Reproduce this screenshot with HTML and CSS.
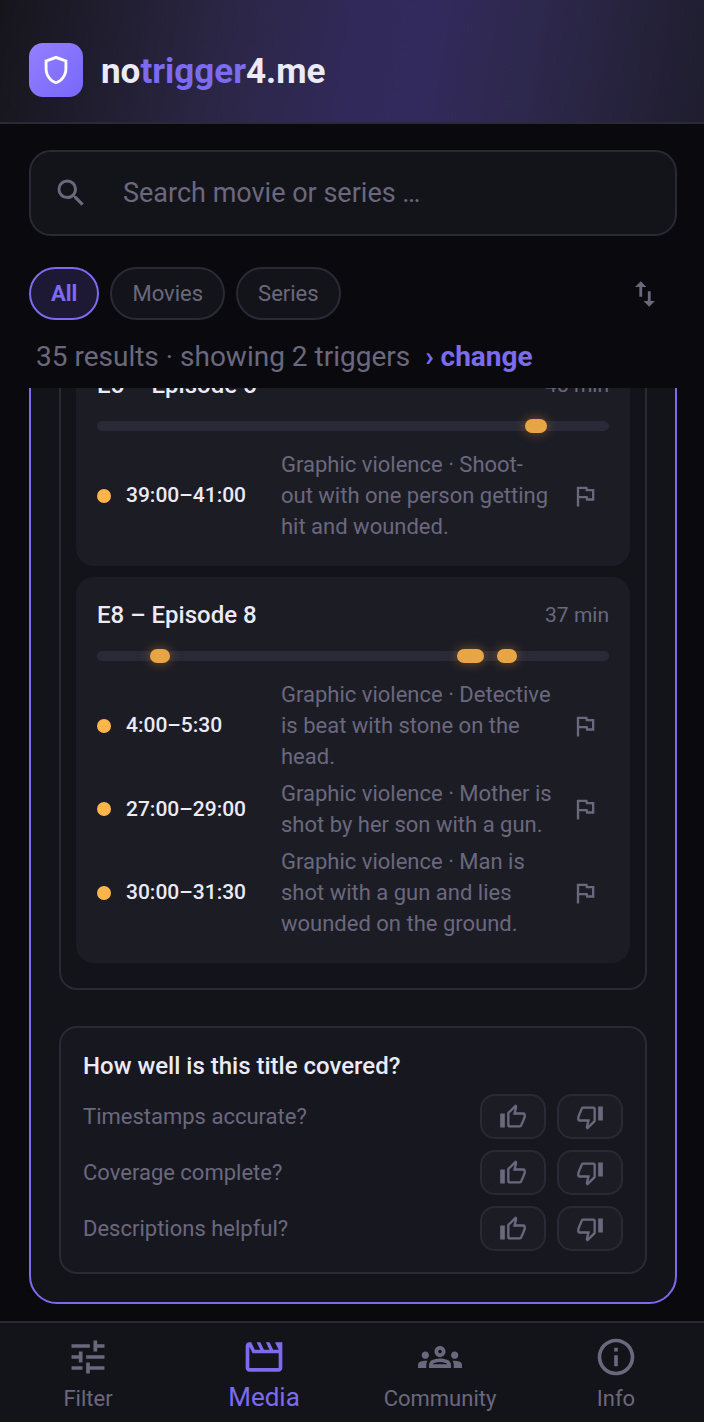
FILE: index.html
```html
<!DOCTYPE html>
<html lang="en">
<head>
    <meta charset="UTF-8">
    <meta name="viewport" content="width=device-width, initial-scale=1.0">
    <title>notrigger4.me</title>
    <link rel="stylesheet" href="styles.css">
</head>
<body>
    <svg class="sprite" aria-hidden="true">
        <symbol id="flag" viewBox="0 0 24 24"><path d="M12.36 6l.4 2H18v6h-3.36l-.4-2H7V6h5.36M14 4H5v17h2v-7h5.6l.4 2h7V6h-5.6L14 4z"/></symbol>
        <symbol id="thumb-up" viewBox="0 0 24 24"><path d="M9 21h9c.83 0 1.54-.5 1.84-1.22l3.02-7.05c.09-.23.14-.47.14-.73v-2c0-1.1-.9-2-2-2h-6.31l.95-4.57.03-.32c0-.41-.17-.79-.44-1.06L14.17 1 7.58 7.59C7.22 7.95 7 8.45 7 9v10c0 1.1.9 2 2 2zM9 9l4.34-4.34L12 10h9v2l-3 7H9V9zM1 9h4v12H1z"/></symbol>
        <symbol id="thumb-down" viewBox="0 0 24 24"><path d="M15 3H6c-.83 0-1.54.5-1.84 1.22l-3.02 7.05c-.09.23-.14.47-.14.73v2c0 1.1.9 2 2 2h6.31l-.95 4.57-.03.32c0 .41.17.79.44 1.06L9.83 23l6.59-6.59c.36-.36.58-.86.58-1.41V5c0-1.1-.9-2-2-2zm0 12l-4.34 4.34L12 14H3v-2l3-7h9v10zm4-12h4v12h-4V3z"/></symbol>
    </svg>

    <header class="header">
        <div class="logo">
            <svg viewBox="0 0 24 24"><path d="M12 2L4 5v6.09c0 5.05 3.41 9.76 8 10.91 4.59-1.15 8-5.86 8-10.91V5l-8-3zm6 9.09c0 4-2.55 7.7-6 8.83-3.45-1.13-6-4.82-6-8.83V6.31l6-2.12 6 2.12v4.78z"/></svg>
        </div>
        <h1 class="brand">no<span>trigger</span>4.me</h1>
    </header>

    <section class="controls">
        <label class="search">
            <svg viewBox="0 0 24 24"><path d="M15.5 14h-.79l-.28-.27A6.471 6.471 0 0 0 16 9.5 6.5 6.5 0 1 0 9.5 16c1.61 0 3.09-.59 4.23-1.57l.27.28v.79l5 4.99L20.49 19l-4.99-5zm-6 0C7.01 14 5 11.99 5 9.5S7.01 5 9.5 5 14 7.01 14 9.5 11.99 14 9.5 14z"/></svg>
            <input type="text" placeholder="Search movie or series …" aria-label="Search movie or series">
        </label>
        <div class="chips">
            <button class="chip active" type="button">All</button>
            <button class="chip" type="button">Movies</button>
            <button class="chip" type="button">Series</button>
            <button class="sort" type="button" aria-label="Sort">
                <svg viewBox="0 0 24 24"><path d="M16 17.01V10h-2v7.01h-3L15 21l4-3.99h-3zM9 3L5 6.99h3V14h2V6.99h3L9 3z"/></svg>
            </button>
        </div>
        <p class="status">35 results · showing 2 triggers <a href="#filter">› change</a></p>
    </section>

    <main class="list">
        <article class="title-card">
            <section class="season">
                <div class="episode">
                    <div class="episode-head">
                        <h2>E5 – Episode 5</h2>
                        <span>45 min</span>
                    </div>
                    <div class="timeline">
                        <span class="mark" style="left: 83.6%; width: 4.3%"></span>
                    </div>
                    <ul class="scenes">
                        <li>
                            <span class="time">39:00–41:00</span>
                            <p>Graphic violence · Shoot-<br>out with one person getting hit and wounded.</p>
                            <button type="button" aria-label="Report"><svg><use href="#flag"/></svg></button>
                        </li>
                    </ul>
                </div>
                <div class="episode">
                    <div class="episode-head">
                        <h2>E8 – Episode 8</h2>
                        <span>37 min</span>
                    </div>
                    <div class="timeline">
                        <span class="mark" style="left: 10.4%; width: 3.9%"></span>
                        <span class="mark" style="left: 70.3%; width: 5.3%"></span>
                        <span class="mark" style="left: 78.2%; width: 3.9%"></span>
                    </div>
                    <ul class="scenes">
                        <li>
                            <span class="time">4:00–5:30</span>
                            <p>Graphic violence · Detective is beat with stone on the head.</p>
                            <button type="button" aria-label="Report"><svg><use href="#flag"/></svg></button>
                        </li>
                        <li>
                            <span class="time">27:00–29:00</span>
                            <p>Graphic violence · Mother is shot by her son with a gun.</p>
                            <button type="button" aria-label="Report"><svg><use href="#flag"/></svg></button>
                        </li>
                        <li>
                            <span class="time">30:00–31:30</span>
                            <p>Graphic violence · Man is shot with a gun and lies wounded on the ground.</p>
                            <button type="button" aria-label="Report"><svg><use href="#flag"/></svg></button>
                        </li>
                    </ul>
                </div>
            </section>

            <section class="feedback">
                <h2>How well is this title covered?</h2>
                <div class="question">
                    <span>Timestamps accurate?</span>
                    <button type="button" aria-label="Yes"><svg><use href="#thumb-up"/></svg></button>
                    <button type="button" aria-label="No"><svg><use href="#thumb-down"/></svg></button>
                </div>
                <div class="question">
                    <span>Coverage complete?</span>
                    <button type="button" aria-label="Yes"><svg><use href="#thumb-up"/></svg></button>
                    <button type="button" aria-label="No"><svg><use href="#thumb-down"/></svg></button>
                </div>
                <div class="question">
                    <span>Descriptions helpful?</span>
                    <button type="button" aria-label="Yes"><svg><use href="#thumb-up"/></svg></button>
                    <button type="button" aria-label="No"><svg><use href="#thumb-down"/></svg></button>
                </div>
            </section>
        </article>
    </main>

    <nav class="tabs">
        <a href="#filter">
            <svg viewBox="0 0 24 24"><path d="M3 17v2h6v-2H3zM3 5v2h10V5H3zm10 16v-2h8v-2h-8v-2h-2v6h2zM7 9v2H3v2h4v2h2V9H7zm14 4v-2H11v2h10zm-6-4h2V7h4V5h-4V3h-2v6z"/></svg>
            Filter
        </a>
        <a class="active" href="#media">
            <svg viewBox="0 0 24 24"><path d="M4 6.47L5.76 10H20v8H4V6.47M22 4h-4l2 4h-3l-2-4h-2l2 4h-3l-2-4H8l2 4H7L5 4H4c-1.1 0-1.99.9-1.99 2L2 18c0 1.1.9 2 2 2h16c1.1 0 2-.9 2-2V4z"/></svg>
            Media
        </a>
        <a href="#community">
            <svg viewBox="0 0 24 24"><path d="M4 13c1.1 0 2-.9 2-2s-.9-2-2-2-2 .9-2 2 .9 2 2 2zm1.13 1.1C4.76 14.04 4.39 14 4 14c-.99 0-1.93.21-2.78.58C.48 14.9 0 15.62 0 16.43V18h4.5v-1.61c0-.83.23-1.61.63-2.29zM20 13c1.1 0 2-.9 2-2s-.9-2-2-2-2 .9-2 2 .9 2 2 2zm4 3.43c0-.81-.48-1.53-1.22-1.85-.85-.37-1.79-.58-2.78-.58-.39 0-.76.04-1.13.1.4.68.63 1.46.63 2.29V18H24v-1.57zM16.24 13.65c-1.17-.52-2.61-.9-4.24-.9-1.63 0-3.07.39-4.24.9C6.68 14.13 6 15.21 6 16.39V18h12v-1.61c0-1.18-.68-2.26-1.76-2.74zM8.07 16c.09-.23.13-.39.91-.69.97-.38 1.99-.56 3.02-.56s2.05.18 3.02.56c.77.3.81.46.91.69H8.07zM12 8c.55 0 1 .45 1 1s-.45 1-1 1-1-.45-1-1 .45-1 1-1m0-2c-1.66 0-3 1.34-3 3s1.34 3 3 3 3-1.34 3-3-1.34-3-3-3z"/></svg>
            Community
        </a>
        <a href="#info">
            <svg viewBox="0 0 24 24"><path d="M11 7h2v2h-2zm0 4h2v6h-2zm1-9C6.48 2 2 6.48 2 12s4.48 10 10 10 10-4.48 10-10S17.52 2 12 2zm0 18c-4.41 0-8-3.59-8-8s3.59-8 8-8 8 3.59 8 8-3.59 8-8 8z"/></svg>
            Info
        </a>
    </nav>
</body>
</html>
```
FILE: styles.css
```css
:root {
    --bg: #0a0a0e;
    --surface: #131419;
    --raised: #1c1c25;
    --line: #2a2935;
    --text: #ebeaf6;
    --muted: #6b687e;
    --accent: #7c6aef;
    --amber: #ffb54a;
}

* {
    box-sizing: border-box;
}

body {
    display: flex;
    flex-direction: column;
    height: 100vh;
    margin: 0;
    overflow: hidden;
    background: var(--bg);
    color: var(--text);
    font-family: Roboto, sans-serif;
    font-size: 22px;
}

h1, h2, p, ul {
    margin: 0;
    padding: 0;
}

button {
    padding: 0;
    border: 0;
    background: none;
    color: var(--muted);
    font: inherit;
}

svg {
    display: block;
    fill: currentColor;
}

a {
    color: var(--accent);
    text-decoration: none;
}

.sprite {
    display: none;
}

.header {
    display: flex;
    align-items: center;
    gap: 18px;
    padding: 43px 29px 25px;
    border-bottom: 2px solid var(--line);
    background: linear-gradient(100deg, #16151b 0%, #221f33 18%, #2c2748 34%, #312959 50%, #322a5c 60%, #2d284c 75%, #1f1d2e 100%);
}

.logo {
    padding: 10px;
    border-radius: 14px;
    background: linear-gradient(135deg, #957fff, #7768fb);
    color: #fff;
}

.logo svg {
    width: 34px;
    height: 34px;
}

.brand {
    padding-top: 4px;
    font-size: 35px;
    font-weight: 700;
    line-height: 42px;
}

.brand span {
    color: var(--accent);
}

.controls {
    padding: 26px 27px 0 29px;
}

.search {
    display: flex;
    align-items: center;
    gap: 34px;
    height: 86px;
    padding: 0 22px;
    border: 2px solid var(--line);
    border-radius: 22px;
    background: var(--surface);
    color: var(--muted);
}

.search svg {
    width: 36px;
    height: 36px;
}

.search input {
    flex: 1;
    min-width: 0;
    padding: 0;
    border: 0;
    outline: 0;
    background: none;
    color: var(--text);
    font: inherit;
    font-size: 27px;
}

.search input::placeholder {
    color: var(--muted);
    opacity: 1;
}

.chips {
    display: flex;
    align-items: center;
    gap: 11px;
    margin-top: 31px;
}

.chip {
    height: 53px;
    padding: 0 20px;
    border: 2px solid var(--line);
    border-radius: 27px;
    background: var(--surface);
}

.chip.active {
    border-color: var(--accent);
    background: #1d1833;
    color: var(--accent);
    font-weight: 700;
}

.sort {
    margin-left: auto;
    margin-right: 15px;
}

.sort svg {
    width: 34px;
    height: 34px;
}

.status {
    padding: 19px 7px 13px;
    color: var(--muted);
    font-size: 28px;
    line-height: 36px;
}

.status a {
    margin-left: 8px;
    font-weight: 700;
}

/* keeps the end of the card in view */
.list {
    display: flex;
    flex: 1;
    flex-direction: column;
    justify-content: flex-end;
    min-height: 0;
    padding: 0 27px 17px 29px;
    overflow: hidden;
}

.title-card {
    padding: 28px;
    border: 2px solid var(--accent);
    border-radius: 28px;
    background: var(--surface);
}

.season {
    display: flex;
    flex-direction: column;
    gap: 11px;
    padding: 15px 15px 25px;
    border: 2px solid var(--line);
    border-radius: 18px;
}

.episode {
    padding: 22px 21px 24px;
    border-radius: 18px;
    background: var(--raised);
}

.episode-head {
    display: flex;
    align-items: center;
    justify-content: space-between;
    color: var(--muted);
    font-size: 21px;
    line-height: 32px;
}

.episode-head h2 {
    color: var(--text);
    font-size: 24px;
    font-weight: 500;
}

.timeline {
    position: relative;
    height: 10px;
    margin: 20px 0 18px;
    border-radius: 5px;
    background: #2a2937;
}

.mark {
    position: absolute;
    top: -2px;
    height: 14px;
    border-radius: 7px;
    background: #e8a545;
    box-shadow: 0 0 12px rgba(255, 170, 50, 0.4);
}

.scenes {
    display: flex;
    flex-direction: column;
    gap: 6px;
    list-style: none;
}

.scenes li {
    display: grid;
    grid-template-columns: 184px 1fr 48px;
    align-items: center;
    color: var(--muted);
    line-height: 31px;
}

.scenes button {
    justify-self: center;
}

.scenes svg {
    width: 28px;
    height: 28px;
}

.time {
    display: flex;
    align-items: center;
    gap: 15px;
    color: var(--text);
    font-size: 21px;
    font-weight: 500;
}

.time::before {
    content: "";
    width: 14px;
    height: 14px;
    border-radius: 50%;
    background: var(--amber);
}

.feedback {
    display: flex;
    flex-direction: column;
    gap: 11px;
    margin-top: 36px;
    padding: 22px 22px 21px;
    border: 2px solid var(--line);
    border-radius: 18px;
    background: #171720;
}

.feedback h2 {
    font-size: 24px;
    font-weight: 500;
    line-height: 33px;
}

.question {
    display: flex;
    align-items: center;
    gap: 11px;
    color: var(--muted);
}

.question span {
    flex: 1;
}

.question button {
    display: flex;
    align-items: center;
    justify-content: center;
    width: 66px;
    height: 45px;
    border: 2px solid var(--line);
    border-radius: 15px;
    background: var(--raised);
}

.question svg {
    width: 28px;
    height: 28px;
}

.tabs {
    display: grid;
    grid-template-columns: repeat(4, 1fr);
    padding: 12px 0 3px;
    border-top: 2px solid var(--line);
    background: var(--surface);
}

.tabs a {
    display: flex;
    flex-direction: column;
    align-items: center;
    color: var(--muted);
    font-size: 22px;
    line-height: 40px;
}

.tabs .active {
    color: var(--accent);
    font-size: 26px;
    line-height: 36px;
}

.tabs svg {
    width: 44px;
    height: 44px;
}
```
